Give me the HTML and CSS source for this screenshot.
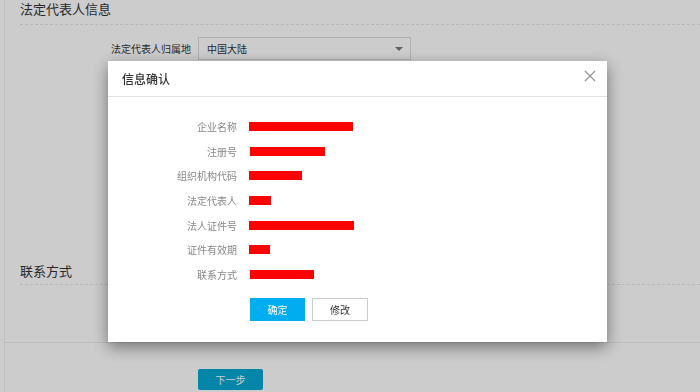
FILE: index.html
```html
<!DOCTYPE html>
<html lang="zh-CN">
<head>
  <meta charset="UTF-8">
  <title>信息确认</title>
  <link rel="stylesheet" href="styles.css">
</head>
<body>
  <div class="page">
    <section class="block block-legal">
      <h2 class="block-title">法定代表人信息</h2>
      <div class="form-row">
        <label class="form-label">法定代表人归属地</label>
        <div class="select">
          <span>中国大陆</span>
          <i class="caret"></i>
        </div>
      </div>
    </section>

    <section class="block block-contact">
      <h2 class="block-title">联系方式</h2>
    </section>

    <div class="actions">
      <button class="btn-next">下一步</button>
    </div>
  </div>

  <div class="overlay"></div>

  <div class="modal">
    <div class="modal-head">
      <h3 class="modal-title">信息确认</h3>
      <svg class="modal-close" width="12" height="12" viewBox="0 0 12 12">
        <path d="M1 1L11 11M11 1L1 11" stroke="#9a9a9a" stroke-width="1.4" fill="none"/>
      </svg>
    </div>
    <div class="modal-body">
      <dl class="info-list">
        <dt>企业名称</dt><dd><span class="redact" style="width:104px"></span></dd>
        <dt>注册号</dt><dd><span class="redact shift" style="width:75px"></span></dd>
        <dt>组织机构代码</dt><dd><span class="redact" style="width:53px"></span></dd>
        <dt>法定代表人</dt><dd><span class="redact" style="width:22px"></span></dd>
        <dt>法人证件号</dt><dd><span class="redact" style="width:105px"></span></dd>
        <dt>证件有效期</dt><dd><span class="redact" style="width:21px"></span></dd>
        <dt>联系方式</dt><dd><span class="redact shift" style="width:64px"></span></dd>
      </dl>
      <div class="modal-btns">
        <button class="btn btn-primary">确定</button>
        <button class="btn btn-default">修改</button>
      </div>
    </div>
  </div>
</body>
</html>
```

FILE: styles.css
```css
body {
  margin: 0;
  background-color: #fff;
  font-family: "Noto Sans CJK SC", "Noto Sans", sans-serif;
  color: #333;
}
.page {
  margin-left: 4px;
  height: 392px;
  border-left: 1px solid #f0f0f0;
}
.block-title {
  margin: 0 0 0 15px;
  padding-bottom: 6px;
  font-size: 13px;
  line-height: 18px;
  font-weight: normal;
  color: #333;
  border-bottom: 1px dashed #e6e6e6;
}
.block-legal {
  height: 262px;
}
.form-row {
  display: flex;
  align-items: center;
  margin-top: 12px;
}
.form-label {
  width: 186px;
  margin-right: 7px;
  text-align: right;
  font-size: 10px;
  color: #333;
}
.select {
  box-sizing: border-box;
  width: 213px;
  height: 23px;
  padding: 0 7px 0 8px;
  display: flex;
  align-items: center;
  justify-content: space-between;
  border: 1px solid #dcdcdc;
  font-size: 10px;
  color: #333;
}
.caret {
  width: 0;
  height: 0;
  border-left: 4px solid transparent;
  border-right: 4px solid transparent;
  border-top: 4px solid #777;
}
.block-contact {
  height: 80px;
  border-bottom: 1px solid #ececec;
}
.block-contact .block-title {
  padding-bottom: 4px;
}
.actions {
  padding: 22px 0 0 193px;
}
.btn-next {
  width: 65px;
  height: 21px;
  border: none;
  border-radius: 2px;
  background-color: #05a8d2;
  color: #fff;
  font-family: inherit;
  font-size: 10px;
}
.overlay {
  position: fixed;
  top: 0;
  left: 0;
  right: 0;
  bottom: 0;
  background-color: rgba(0, 0, 0, 0.2);
}
.modal {
  position: fixed;
  top: 61px;
  left: 108px;
  width: 499px;
  background-color: #fff;
  box-shadow: 0 5px 15px rgba(0, 0, 0, 0.45);
}
.modal-head {
  display: flex;
  align-items: flex-start;
  justify-content: space-between;
  height: 35px;
  padding: 0 11px 0 14px;
  border-bottom: 1px solid #e3e3e3;
}
.modal-title {
  margin: 0;
  font-size: 12px;
  line-height: 35px;
  font-weight: 500;
  color: #333;
}
.modal-close {
  margin-top: 9px;
}
.modal-body {
  padding: 17px 0 21px;
}
.info-list {
  display: grid;
  grid-template-columns: 129px 1fr;
  grid-auto-rows: 24.7px;
  column-gap: 12px;
  align-items: center;
  margin: 0;
}
.info-list dt {
  text-align: right;
  font-size: 10px;
  color: #888;
}
.info-list dd {
  margin: 0;
  display: flex;
  align-items: center;
}
.redact {
  display: inline-block;
  height: 9px;
  background-color: #f00;
}
.redact.shift {
  margin-left: 1px;
}
.modal-btns {
  display: flex;
  gap: 7px;
  margin-top: 11px;
  padding-left: 142px;
}
.btn {
  box-sizing: border-box;
  height: 23px;
  font-family: inherit;
  font-size: 10px;
}
.btn-primary {
  width: 55px;
  border: none;
  background-color: #00aeef;
  color: #fff;
}
.btn-default {
  width: 56px;
  border: 1px solid #ccc;
  background-color: #fff;
  color: #333;
}
```
